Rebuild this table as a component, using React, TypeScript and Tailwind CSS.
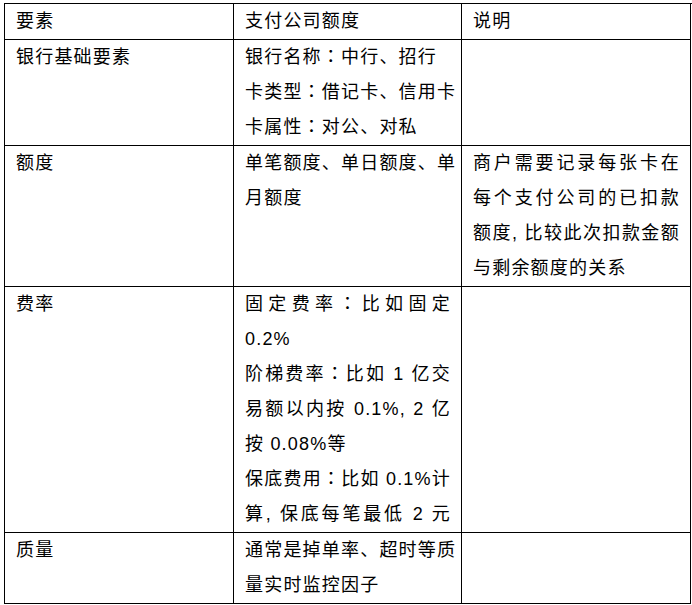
import React from 'react';

type Line = { text: string; justify?: boolean };

const font = { fontFamily: '"Liberation Sans", "Noto Sans CJK SC", sans-serif' };

const rows: { label: string; quota: Line[]; note: Line[] }[] = [
  {
    label: '银行基础要素',
    quota: [
      { text: '银行名称：中行、招行' },
      { text: '卡类型：借记卡、信用卡', justify: true },
      { text: '卡属性：对公、对私' },
    ],
    note: [],
  },
  {
    label: '额度',
    quota: [
      { text: '单笔额度、单日额度、单', justify: true },
      { text: '月额度' },
    ],
    note: [
      { text: '商户需要记录每张卡在', justify: true },
      { text: '每个支付公司的已扣款', justify: true },
      { text: '额度, 比较此次扣款金额', justify: true },
      { text: '与剩余额度的关系' },
    ],
  },
  {
    label: '费率',
    quota: [
      { text: '固定费率：比如固定', justify: true },
      { text: '0.2%' },
      { text: '阶梯费率：比如 1 亿交', justify: true },
      { text: '易额以内按 0.1%, 2 亿', justify: true },
      { text: '按 0.08%等' },
      { text: '保底费用：比如 0.1%计', justify: true },
      { text: '算, 保底每笔最低 2 元', justify: true },
    ],
    note: [],
  },
  {
    label: '质量',
    quota: [
      { text: '通常是掉单率、超时等质', justify: true },
      { text: '量实时监控因子' },
    ],
    note: [],
  },
];

// the full-width colon sits centred in the reference, as in the TC glyphs
function Text({ text }: { text: string }) {
  const parts = text.split('：');
  return (
    <>
      {parts.map((p, i) => (
        <React.Fragment key={i}>
          {i > 0 && <span className="font-['Noto_Sans_CJK_TC'] leading-none">：</span>}
          {p}
        </React.Fragment>
      ))}
    </>
  );
}

function Cell({ lines }: { lines: Line[] }) {
  return (
    <div className="border-r border-b border-black pl-[11px] pr-[10px]">
      {lines.map((l, i) => (
        <div
          key={i}
          className={
            l.justify
              ? 'h-[35px] text-justify [text-align-last:justify] whitespace-nowrap'
              : 'h-[35px] whitespace-nowrap'
          }
        >
          <Text text={l.text} />
        </div>
      ))}
    </div>
  );
}

export default function App() {
  return (
    <div className="bg-white w-[692px] h-[605px] pt-[3px] pl-[4px]" style={font}>
      <div className="grid grid-cols-[229px_228px_229px] border-l border-t border-black text-[18px] leading-[35px] tracking-[1.2px] text-black">
        <Cell lines={[{ text: '要素' }]} />
        <Cell lines={[{ text: '支付公司额度' }]} />
        <Cell lines={[{ text: '说明' }]} />
        {rows.map((r) => (
          <React.Fragment key={r.label}>
            <Cell lines={[{ text: r.label }]} />
            <Cell lines={r.quota} />
            <Cell lines={r.note} />
          </React.Fragment>
        ))}
      </div>
    </div>
  );
}
